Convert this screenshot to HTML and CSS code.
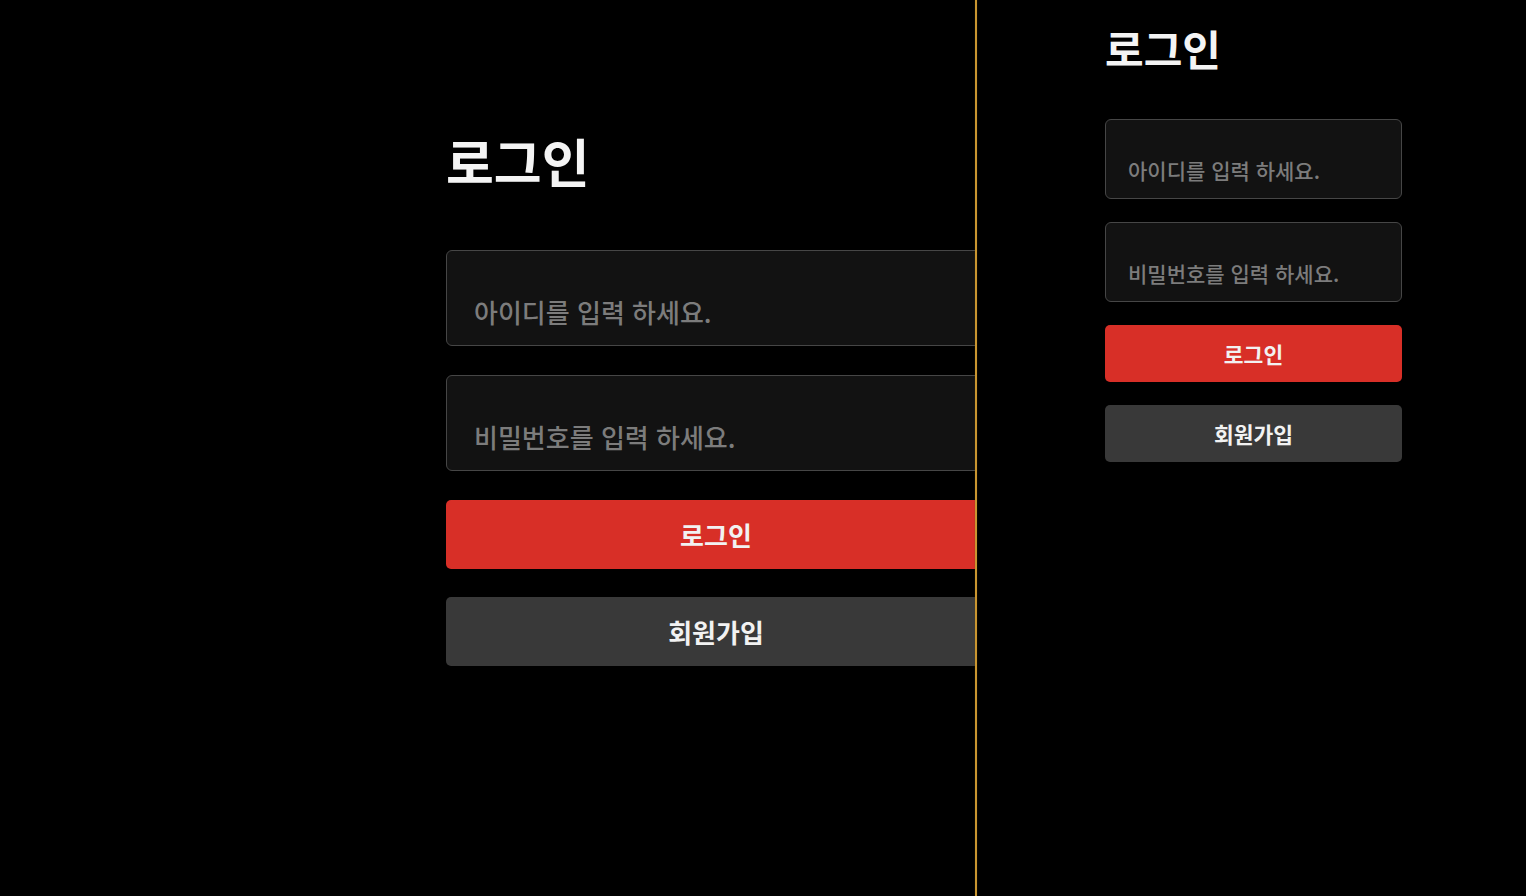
FILE: index.html
```html
<!DOCTYPE html>
<html lang="ko">
<head>
<meta charset="utf-8">
<title>로그인</title>
<link rel="stylesheet" href="styles.css">
</head>
<body>
<div class="page">
  <section class="pane pane-wide">
    <form class="form form-wide">
      <h1 class="title">로그인</h1>
      <input class="field" type="text" placeholder="아이디를 입력 하세요.">
      <input class="field" type="password" placeholder="비밀번호를 입력 하세요.">
      <button class="btn btn-primary" type="button">로그인</button>
      <button class="btn btn-secondary" type="button">회원가입</button>
    </form>
  </section>
  <div class="divider"></div>
  <section class="pane pane-narrow">
    <form class="form form-narrow">
      <h1 class="title">로그인</h1>
      <input class="field" type="text" placeholder="아이디를 입력 하세요.">
      <input class="field" type="password" placeholder="비밀번호를 입력 하세요.">
      <button class="btn btn-primary" type="button">로그인</button>
      <button class="btn btn-secondary" type="button">회원가입</button>
    </form>
  </section>
</div>
</body>
</html>
```

FILE: styles.css
```css
* { box-sizing: border-box; }
html, body {
  margin: 0;
  padding: 0;
  background: #000;
  height: 100%;
}
body {
  font-family: "Noto Sans CJK KR", "Noto Sans", sans-serif;
  color: #f2f2f2;
  overflow: hidden;
}
.page {
  display: flex;
  width: 1526px;
  height: 896px;
}
.pane {
  height: 100%;
  overflow: hidden;
}
.pane-wide {
  width: 975px;
  flex: none;
  padding-left: 446px;
}
.divider {
  width: 2px;
  flex: none;
  background: #c99530;
  box-shadow: 0 0 1px #6b4a10;
}
.pane-narrow {
  flex: 1;
  padding-left: 128px;
}
.form {
  display: flex;
  flex-direction: column;
}
.title {
  margin: 0;
  font-weight: 700;
  color: #f4f4f4;
  line-height: 1;
}
.field {
  display: block;
  width: 100%;
  background: #121212;
  border: 1px solid #464646;
  border-radius: 6px;
  color: #ddd;
  font-family: inherit;
  font-weight: 500;
  outline: none;
}
.field::placeholder {
  color: #7c7c7c;
}
.btn {
  display: block;
  width: 100%;
  border: none;
  border-radius: 5px;
  color: #f2f2f2;
  font-family: inherit;
  font-weight: 700;
  cursor: pointer;
}
.btn-primary { background: #d82f27; }
.btn-secondary { background: #393939; }

/* wide version */
.form-wide {
  width: 540px;
  padding-top: 135px;
}
.form-wide .title {
  font-size: 52px;
  margin-bottom: 63px;
}
.form-wide .field {
  height: 96px;
  padding: 26px 26px 0 27px;
  font-size: 26px;
  margin-bottom: 29px;
}
.form-wide .btn {
  height: 69px;
  font-size: 26px;
}
.form-wide .btn-primary { margin-bottom: 28px; }

/* narrow version */
.form-narrow {
  width: 297px;
  padding-top: 27px;
}
.form-narrow .title {
  font-size: 42px;
  margin-bottom: 50px;
}
.form-narrow .field {
  height: 80px;
  padding: 22px 20px 0 22px;
  font-size: 21px;
  margin-bottom: 23px;
}
.form-narrow .btn {
  height: 57px;
  font-size: 21.5px;
}
.form-narrow .btn-primary { margin-bottom: 23px; }
```
